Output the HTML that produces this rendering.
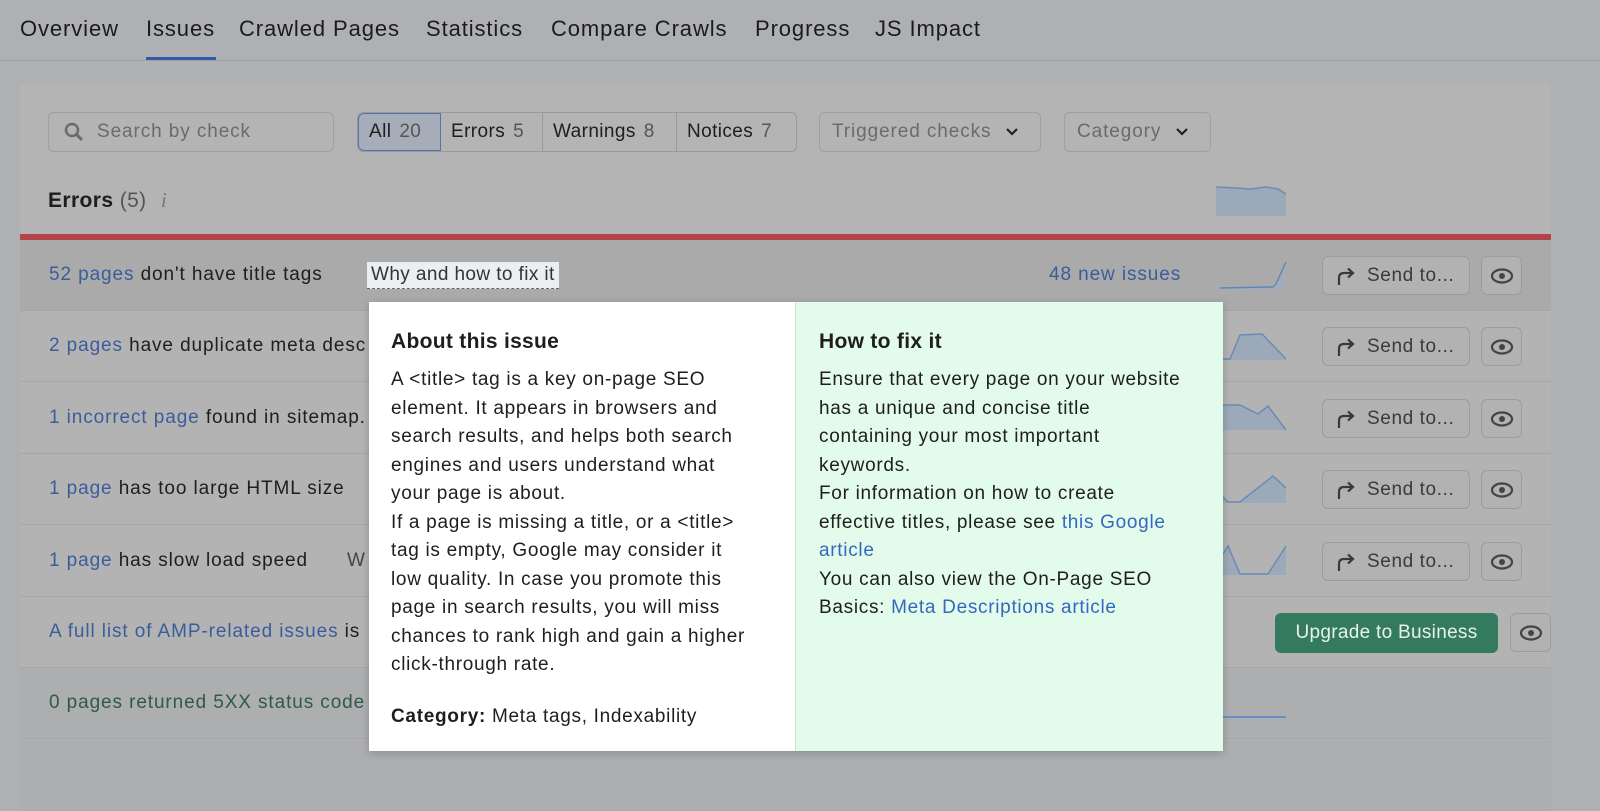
<!DOCTYPE html>
<html><head><meta charset="utf-8"><style>
*{box-sizing:border-box;margin:0;padding:0}
body{width:1600px;height:781px;overflow:hidden;background:#aeb0b3;font-family:"Liberation Sans",sans-serif;color:#1e1e1e;position:relative;letter-spacing:0.9px}
.tabs{position:absolute;left:0;top:0;width:1600px;height:61px;border-bottom:1px solid #9ea0a4}
.tab{position:absolute;top:16px;font-size:22px;color:#1b1b1b;letter-spacing:0.9px}
.ul{position:absolute;left:146px;top:57px;width:70px;height:3px;background:#2e5aa8}
.card{position:absolute;left:20px;top:83px;width:1531px;height:720px;background:#b4b4b4;border-radius:6px}
.box{position:absolute;border:1px solid #a0a0a0;border-radius:6px;font-size:19px;color:#6b6b6b;display:flex;align-items:center}
.seg{position:absolute;left:357px;top:112px;height:40px;display:flex;border:1px solid #9a9a9a;border-radius:6px;overflow:hidden;font-size:19px;letter-spacing:0.4px}
.seg div{padding:0 10px;display:flex;align-items:center;border-right:1px solid #9a9a9a;color:#1e1e1e;white-space:nowrap}
.seg div span{color:#555;margin-left:8px}
.seg div:last-child{border-right:none}
.abs{position:absolute}
.row{position:absolute;left:20px;width:1531px;height:71px;border-bottom:1px solid #a6a6a6}
.rt{position:absolute;left:29px;top:24px;font-size:19px;white-space:nowrap}
a{color:#3a5d9c;text-decoration:none}
.send{position:absolute;left:1302px;top:16px;width:148px;height:39px;border:1px solid #9c9c9c;border-radius:6px;background:#b2b2b2;font-size:19px;color:#3a3a3a;display:flex;align-items:center;padding-left:12px;gap:10px;white-space:nowrap;letter-spacing:0.6px}
.eye{position:absolute;left:1461px;top:16px;width:41px;height:39px;border:1px solid #9c9c9c;border-radius:6px;background:#b2b2b2;display:flex;align-items:center;justify-content:center}
.pop{position:absolute;left:369px;top:302px;width:854px;height:449px;display:flex;box-shadow:0 2px 8px rgba(0,0,0,.2)}
.pl{width:427px;background:#fff;padding:26px 22px;font-size:19px;line-height:28.5px;border-right:1px solid #c8e6d0;white-space:nowrap;letter-spacing:0.7px}
.pr{width:427px;background:#e3fbeb;padding:26px 23px;font-size:19px;line-height:28.5px;white-space:nowrap;letter-spacing:0.7px}
.pop h3{font-size:21px;font-weight:bold;margin-bottom:10px;line-height:28px;letter-spacing:0.3px}
.pop a{color:#3468c0}
</style></head><body>
<div class="tabs">
<div class="tab" style="left:20px">Overview</div>
<div class="tab" style="left:146px">Issues</div>
<div class="tab" style="left:239px">Crawled Pages</div>
<div class="tab" style="left:426px">Statistics</div>
<div class="tab" style="left:551px">Compare Crawls</div>
<div class="tab" style="left:755px">Progress</div>
<div class="tab" style="left:875px">JS Impact</div>
<div class="ul"></div>
</div>
<div class="card"></div>
<div class="box" style="left:48px;top:112px;width:286px;height:40px;padding-left:14px"><svg width="22" height="22" viewBox="0 0 22 22"><circle cx="9" cy="9" r="6" fill="none" stroke="#6b6b6b" stroke-width="2.5"/><path d="M13 13l6 6" stroke="#6b6b6b" stroke-width="3"/></svg><span style="margin-left:12px">Search by check</span></div>
<div class="seg"><div style="width:83px;background:#a6adb8;border:1px solid #5074b0;border-radius:6px 0 0 6px">All<span>20</span></div><div style="width:102px">Errors<span>5</span></div><div style="width:134px">Warnings<span>8</span></div><div style="width:119px">Notices<span>7</span></div></div>
<div class="box" style="left:819px;top:112px;width:222px;height:40px;padding-left:12px">Triggered checks<svg style="margin-left:14px" width="14" height="10"><path d="M2 2l5 5 5-5" fill="none" stroke="#222" stroke-width="2.2"/></svg></div>
<div class="box" style="left:1064px;top:112px;width:147px;height:40px;padding-left:12px">Category<svg style="margin-left:14px" width="14" height="10"><path d="M2 2l5 5 5-5" fill="none" stroke="#222" stroke-width="2.2"/></svg></div>
<div class="abs" style="left:48px;top:188px;font-size:21px;letter-spacing:0.4px"><b>Errors</b> <span style="color:#555">(5)</span> <i style="color:#777;font-family:'Liberation Serif';margin-left:8px">i</i></div>
<svg class="abs" style="left:1216px;top:184px" width="70" height="32"><path d="M0 3 L20 4 L35 5 L50 3 L62 5 L70 10 L70 32 L0 32Z" fill="#9ba9b8"/><path d="M0 3 L20 4 L35 5 L50 3 L62 5 L70 10" fill="none" stroke="#6b8bb5" stroke-width="1.5"/></svg>
<div class="abs" style="left:20px;top:234px;width:1531px;height:6px;background:#b04448"></div>

<div class="row" style="top:240px;background:#aaaaab">
<div class="rt"><a>52 pages</a> don't have title tags</div>
<div class="abs" style="left:347px;top:22px;font-size:19px;background:#eceff2;padding:2px 4px;border-bottom:1px dashed #666;color:#333;white-space:nowrap;letter-spacing:0.4px">Why and how to fix it</div>
<div class="abs" style="left:1029px;top:24px;font-size:19px;color:#3a5d9c">48 new issues</div>
<svg class="abs" style="left:1198px;top:20px" width="70" height="30"><path d="M2 28 L55 27 L58 24 L68 2 L68 30 L2 30Z" fill="#a4adb7"/><path d="M2 28 L55 27 L58 24 L68 2" fill="none" stroke="#5f86bd" stroke-width="1.5"/></svg>
<div class="send"><svg width="22" height="20"><path d="M4 19 V12 Q4 7 9 7 H17" fill="none" stroke="#3a3a3a" stroke-width="2.2"/><path d="M13 2.5 L18 7 L13 11.5" fill="none" stroke="#3a3a3a" stroke-width="2.2"/></svg>Send to...</div><div class="eye"><svg width="24" height="16"><ellipse cx="12" cy="8" rx="10" ry="6.5" fill="none" stroke="#444" stroke-width="2.2"/><circle cx="12" cy="8" r="3" fill="#444"/></svg></div>
</div>
<div class="row" style="top:311px;background:#b3b3b3"><div class="rt"><a>2 pages</a> have duplicate meta desc</div><div class="send"><svg width="22" height="20"><path d="M4 19 V12 Q4 7 9 7 H17" fill="none" stroke="#3a3a3a" stroke-width="2.2"/><path d="M13 2.5 L18 7 L13 11.5" fill="none" stroke="#3a3a3a" stroke-width="2.2"/></svg>Send to...</div><div class="eye"><svg width="24" height="16"><ellipse cx="12" cy="8" rx="10" ry="6.5" fill="none" stroke="#444" stroke-width="2.2"/><circle cx="12" cy="8" r="3" fill="#444"/></svg></div></div>
<div class="row" style="top:383px;background:#b3b3b3"><div class="rt"><a>1 incorrect page</a> found in sitemap.</div><div class="send"><svg width="22" height="20"><path d="M4 19 V12 Q4 7 9 7 H17" fill="none" stroke="#3a3a3a" stroke-width="2.2"/><path d="M13 2.5 L18 7 L13 11.5" fill="none" stroke="#3a3a3a" stroke-width="2.2"/></svg>Send to...</div><div class="eye"><svg width="24" height="16"><ellipse cx="12" cy="8" rx="10" ry="6.5" fill="none" stroke="#444" stroke-width="2.2"/><circle cx="12" cy="8" r="3" fill="#444"/></svg></div></div>
<div class="row" style="top:454px;background:#b3b3b3"><div class="rt"><a>1 page</a> has too large HTML size</div><div class="send"><svg width="22" height="20"><path d="M4 19 V12 Q4 7 9 7 H17" fill="none" stroke="#3a3a3a" stroke-width="2.2"/><path d="M13 2.5 L18 7 L13 11.5" fill="none" stroke="#3a3a3a" stroke-width="2.2"/></svg>Send to...</div><div class="eye"><svg width="24" height="16"><ellipse cx="12" cy="8" rx="10" ry="6.5" fill="none" stroke="#444" stroke-width="2.2"/><circle cx="12" cy="8" r="3" fill="#444"/></svg></div></div>
<div class="row" style="top:526px;background:#b3b3b3"><div class="rt"><a>1 page</a> has slow load speed</div><div class="abs" style="left:327px;top:24px;font-size:19px;color:#444">W</div><div class="send"><svg width="22" height="20"><path d="M4 19 V12 Q4 7 9 7 H17" fill="none" stroke="#3a3a3a" stroke-width="2.2"/><path d="M13 2.5 L18 7 L13 11.5" fill="none" stroke="#3a3a3a" stroke-width="2.2"/></svg>Send to...</div><div class="eye"><svg width="24" height="16"><ellipse cx="12" cy="8" rx="10" ry="6.5" fill="none" stroke="#444" stroke-width="2.2"/><circle cx="12" cy="8" r="3" fill="#444"/></svg></div></div>
<div class="row" style="top:597px;background:#b3b3b3"><div class="rt"><a>A full list of AMP-related issues</a> is</div>
<div class="abs" style="left:1255px;top:16px;width:223px;height:40px;background:#347a5f;border-radius:6px;color:#e8f2ec;font-size:19px;display:flex;align-items:center;justify-content:center;letter-spacing:0.3px">Upgrade to Business</div>
<div class="eye" style="left:1490px"><svg width="24" height="16"><ellipse cx="12" cy="8" rx="10" ry="6.5" fill="none" stroke="#444" stroke-width="2.2"/><circle cx="12" cy="8" r="3" fill="#444"/></svg></div></div>
<div class="row" style="top:668px;background:#adaeb0"><div class="rt" style="color:#2f5a48">0 pages returned 5XX status code</div>
<div class="abs" style="left:1198px;top:48px;width:68px;height:2px;background:#6a8fc4"></div></div>
<div class="row" style="top:740px;background:#adaeb0;border:none"></div>
<svg class="abs" style="left:1218px;top:330px" width="70" height="250">
<path d="M0 29 L12 29 L22 5 L44 4 L68 29 L68 30 L0 30Z" fill="#9ba9b8"/><path d="M0 29 L12 29 L22 5 L44 4 L68 29" fill="none" stroke="#6b8bb5" stroke-width="1.5"/>
<path d="M0 75 L22 75 L40 84 L50 76 L68 100 L0 100Z" fill="#9ba9b8"/><path d="M0 75 L22 75 L40 84 L50 76 L68 100" fill="none" stroke="#6b8bb5" stroke-width="1.5"/>
<path d="M0 162 L10 172 L22 172 L55 146 L68 158 L68 173 L0 173Z" fill="#9ba9b8"/><path d="M0 162 L10 172 L22 172 L55 146 L68 158" fill="none" stroke="#6b8bb5" stroke-width="1.5"/>
<path d="M0 232 L10 216 L22 244 L50 244 L68 216 L68 245 L0 245Z" fill="#9ba9b8"/><path d="M0 232 L10 216 L22 244 L50 244 L68 216" fill="none" stroke="#6b8bb5" stroke-width="1.5"/></svg>
<div class="pop">
<div class="pl"><h3>About this issue</h3>A &lt;title&gt; tag is a key on-page SEO<br>element. It appears in browsers and<br>search results, and helps both search<br>engines and users understand what<br>your page is about.<br>If a page is missing a title, or a &lt;title&gt;<br>tag is empty, Google may consider it<br>low quality. In case you promote this<br>page in search results, you will miss<br>chances to rank high and gain a higher<br>click-through rate.<div style="margin-top:23px"><b>Category:</b> Meta tags, Indexability</div></div>
<div class="pr"><h3>How to fix it</h3>Ensure that every page on your website<br>has a unique and concise title<br>containing your most important<br>keywords.<br>For information on how to create<br>effective titles, please see <a>this Google<br>article</a><br>You can also view the On-Page SEO<br>Basics: <a>Meta Descriptions article</a></div>
</div>
</body></html>
